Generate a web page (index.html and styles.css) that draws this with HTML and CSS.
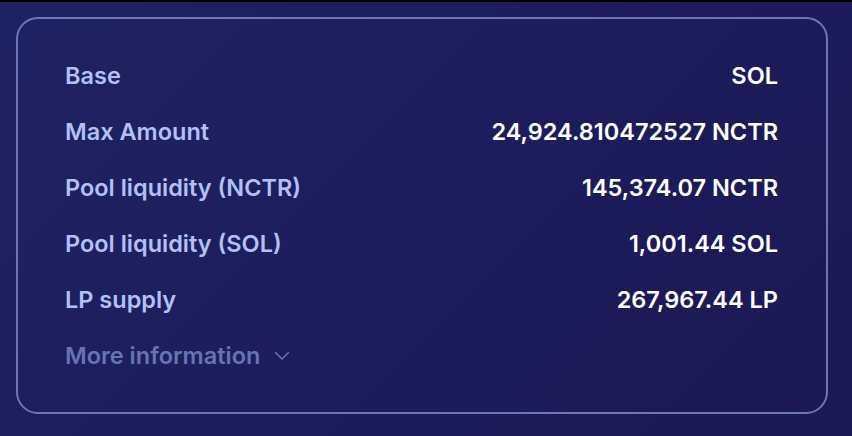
FILE: index.html
```html
<!DOCTYPE html>
<html>
<head>
<meta charset="utf-8">
<link rel="stylesheet" href="styles.css">
</head>
<body>
<div class="page">
  <div class="card">
    <div class="row"><span class="label">Base</span><span class="value">SOL</span></div>
    <div class="row"><span class="label">Max Amount</span><span class="value">24,924.810472527 NCTR</span></div>
    <div class="row"><span class="label">Pool liquidity (NCTR)</span><span class="value">145,374.07 NCTR</span></div>
    <div class="row"><span class="label">Pool liquidity (SOL)</span><span class="value">1,001.44 SOL</span></div>
    <div class="row"><span class="label">LP supply</span><span class="value">267,967.44 LP</span></div>
    <div class="row more"><span class="label">More information</span>
      <svg class="chev" width="16" height="10" viewBox="0 0 16 10"><path d="M1.5 1.5 L8 8 L14.5 1.5" fill="none" stroke="currentColor" stroke-width="1.5" stroke-linecap="round" stroke-linejoin="round"/></svg>
    </div>
  </div>
</div>
</body>
</html>
```
FILE: styles.css
```css
html, body { margin: 0; padding: 0; }
body {
  width: 852px; height: 436px; overflow: hidden;
  background: #1b1a55;
  font-family: Inter, "Noto Sans", sans-serif;
}
.page {
  box-sizing: border-box;
  width: 852px; height: 436px;
  border-top: 2px solid #000;
  background: linear-gradient(135deg, #1f2262 0%, #1d1d5d 50%, #1b1853 100%);
  padding: 15px 24px 22px 16px;
}
.card {
  box-sizing: border-box;
  height: 397px;
  border: 2px solid #6b76b9;
  border-radius: 22px;
  padding: 28px 48px 0 47px;
  display: flex; flex-direction: column;
}
.row {
  display: flex; justify-content: space-between; align-items: center;
  height: 56px;
  font-size: 23.5px; font-weight: 600;
  letter-spacing: 0;
}
.label { color: #b3c0f4; }
.value { color: #ffffff; }
.more { justify-content: flex-start; gap: 14px; }
.more .label { color: #6873b4; }
.chev { color: #6873b4; margin-top: 2px; }
```
